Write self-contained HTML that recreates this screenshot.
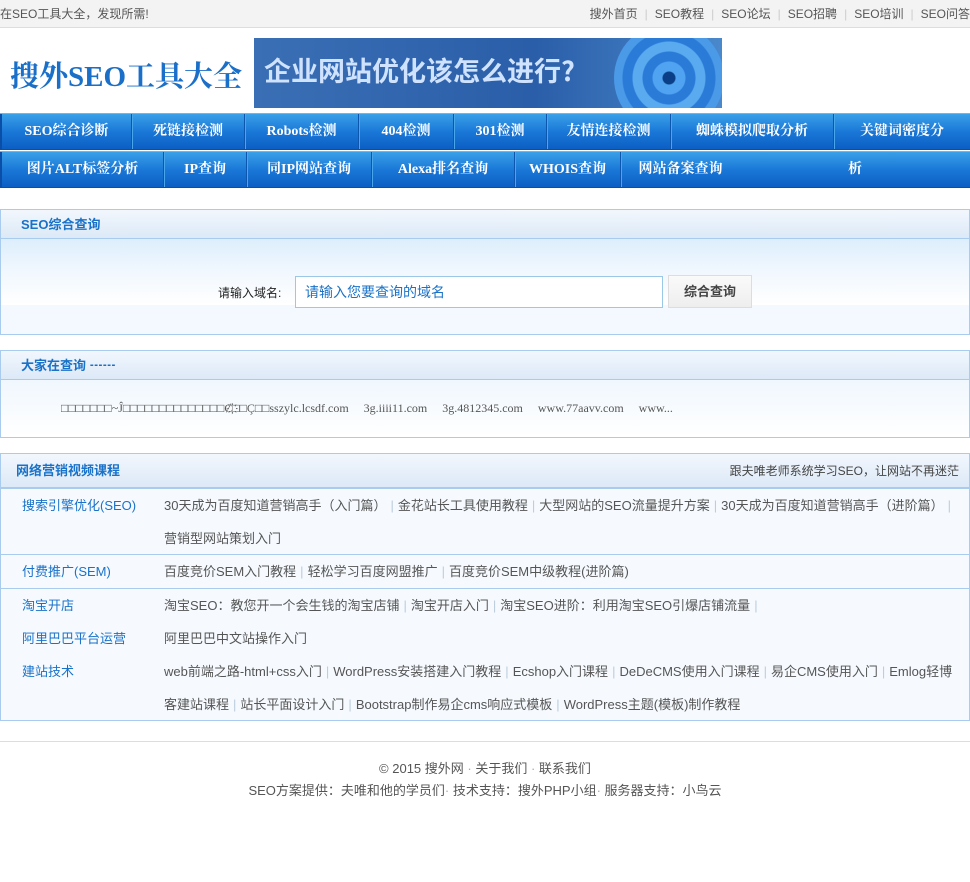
<!DOCTYPE html>
<html><head><meta charset="utf-8"><style>
*{margin:0;padding:0;box-sizing:border-box}
body{width:970px;height:882px;background:#fff;font-family:"Liberation Sans","Noto Sans CJK SC",sans-serif;font-size:13px;color:#555;position:relative;overflow:hidden}
.top{height:28px;background:#f3f3f3;border-bottom:1px solid #ddd;font-size:12px;color:#555;line-height:28px;position:relative}
.top .l{position:absolute;left:0}
.top .r{position:absolute;right:0}
.top .r span{color:#ccc;margin:0 7px}
.logo{position:absolute;left:10px;top:54px;font-family:"Liberation Serif","Noto Serif CJK SC",serif;font-weight:bold;font-size:29px;color:#1a6fc8;letter-spacing:0}
.ban{position:absolute;left:254px;top:38px;width:468px;height:70px;background:linear-gradient(90deg,#3a6fb5,#2a5ea8 60%,#4a88cc);overflow:hidden}
.ban b{position:absolute;left:10px;top:12px;font-size:27px;color:#cfe2ff;font-family:"Noto Sans CJK SC",sans-serif;font-weight:bold}
.ban i{position:absolute;left:360px;top:-15px;width:110px;height:110px;border-radius:50%;background:radial-gradient(circle,#0a3f88 0 6px,#4fa3f0 7px 16px,#2a7ad8 17px 26px,#5aaaf0 27px 36px,#2a7ad8 37px 46px,#4a9ae8 47px 55px)}
.nav{position:absolute;left:0;width:970px;height:37px;background:linear-gradient(#3aa0e8,#1a78d8 50%,#0c5fc4);border-top:1px solid #6ab8f0;border-bottom:1px solid #0a4ea8;display:flex;font-family:"Liberation Serif","Noto Serif CJK SC",serif;font-weight:bold;color:#fff;font-size:14px;line-height:36px}
.nav div{text-align:center;border-left:1px solid #0d56ad;box-shadow:inset 1px 0 0 #4aa6ea}
.nav div:first-child{border-left:none;box-shadow:none;border-left:2px solid #0a4ea8}
.panel{position:absolute;left:0;width:970px;border:1px solid #a9cbed;background:#f6faff}
.ph{height:29px;background:linear-gradient(#f2f7fd,#dce9f7);border-bottom:1px solid #a9cbed;font-weight:bold;color:#1a72c8;font-size:13px;line-height:29px;padding-left:20px;position:relative}
.inp{position:absolute;left:295px;top:276px;width:368px;height:32px;border:1px solid #9cc8e8;background:#fff;color:#1a72c8;font-size:14px;line-height:30px;padding-left:9px}
.btn{position:absolute;left:668px;top:275px;width:84px;height:33px;border:1px solid #ddd;background:linear-gradient(#fafafa,#eee);color:#444;font-weight:bold;font-size:13px;line-height:31px;text-align:center}
.row{display:flex;border-top:1px solid #a9cbed;padding:0}
.row:first-of-type{border-top:none}
.c1{width:163px;padding-left:21px;color:#1a72c8;line-height:33px}
.c2{flex:1;line-height:33px;color:#555;padding-right:10px}
.c2 s{text-decoration:none;color:#bcd;margin:0 4px}
</style></head><body>
<div class="top"><span class="l">在SEO工具大全，发现所需!</span><span class="r">搜外首页<span>|</span>SEO教程<span>|</span>SEO论坛<span>|</span>SEO招聘<span>|</span>SEO培训<span>|</span>SEO问答</span></div>
<div class="logo">搜外SEO工具大全</div>
<div class="ban"><b>企业网站优化该怎么进行?</b><i></i></div>
<div class="nav" style="top:113px"><div style="width:131px">SEO综合诊断</div><div style="width:113px">死链接检测</div><div style="width:114px">Robots检测</div><div style="width:95px">404检测</div><div style="width:93px">301检测</div><div style="width:124px">友情连接检测</div><div style="width:163px">蜘蛛模拟爬取分析</div><div style="width:137px">关键词密度分</div></div>
<div class="nav" style="top:151px"><div style="width:163px">图片ALT标签分析</div><div style="width:83px">IP查询</div><div style="width:125px">同IP网站查询</div><div style="width:143px">Alexa排名查询</div><div style="width:106px">WHOIS查询</div><div style="width:120px">网站备案查询</div><div style="width:230px;box-shadow:none;border-left:none">析</div></div>
<div class="panel" style="top:209px;height:126px;background:linear-gradient(#ddeefc 29px,#f0f7fe 60px,#fff 95px,#f4f9ff 95px)"><div class="ph">SEO综合查询</div>
<span style="position:absolute;left:217px;top:74px;font-size:12px;color:#222">请输入域名:</span></div>
<div class="inp">请输入您要查询的域名</div><div class="btn">综合查询</div>
<div class="panel" style="top:350px;height:88px;background:linear-gradient(#e8f3fd,#fff)"><div class="ph">大家在查询 ┅┅</div>
<div style="position:absolute;left:60px;top:50px;font-family:'Liberation Serif',serif;font-size:12px;color:#555;white-space:nowrap">□□□□□□□~Ĵ□□□□□□□□□□□□□□Ȼ҉□□Ç□□sszylc.lcsdf.com &nbsp;&nbsp;&nbsp; 3g.iiii11.com &nbsp;&nbsp;&nbsp; 3g.4812345.com &nbsp;&nbsp;&nbsp; www.77aavv.com &nbsp;&nbsp;&nbsp; www...</div></div>
<div class="panel" style="top:453px;height:268px"><div class="ph" style="height:34px;line-height:34px;padding-left:15px">网络营销视频课程<span style="position:absolute;right:10px;font-weight:normal;color:#444;font-size:12px">跟夫唯老师系统学习SEO，让网站不再迷茫</span></div>
<div class="row" style="height:66px"><div class="c1">搜索引擎优化(SEO)</div><div class="c2">30天成为百度知道营销高手（入门篇）<s>|</s>金花站长工具使用教程<s>|</s>大型网站的SEO流量提升方案<s>|</s>30天成为百度知道营销高手（进阶篇）<s>|</s><br>营销型网站策划入门</div></div>
<div class="row" style="height:34px;border-top:1px solid #a9cbed"><div class="c1">付费推广(SEM)</div><div class="c2">百度竞价SEM入门教程<s>|</s>轻松学习百度网盟推广<s>|</s>百度竞价SEM中级教程(进阶篇)</div></div>
<div class="row" style="border-top:1px solid #a9cbed"><div class="c1">淘宝开店<br>阿里巴巴平台运营<br>建站技术</div><div class="c2">淘宝SEO：教您开一个会生钱的淘宝店铺<s>|</s>淘宝开店入门<s>|</s>淘宝SEO进阶：利用淘宝SEO引爆店铺流量<s>|</s><br>阿里巴巴中文站操作入门<br>web前端之路-html+css入门<s>|</s>WordPress安装搭建入门教程<s>|</s>Ecshop入门课程<s>|</s>DeDeCMS使用入门课程<s>|</s>易企CMS使用入门<s>|</s>Emlog轻博<br>客建站课程<s>|</s>站长平面设计入门<s>|</s>Bootstrap制作易企cms响应式模板<s>|</s>WordPress主题(模板)制作教程</div></div>
</div>
<div style="position:absolute;top:741px;left:0;width:970px;border-top:1px solid #ddd"></div>
<div style="position:absolute;top:758px;left:0;width:970px;text-align:center;line-height:22px;color:#555">© 2015 搜外网 <span style="color:#aaa">·</span> 关于我们 <span style="color:#aaa">·</span> 联系我们<br>SEO方案提供：夫唯和他的学员们<span style="color:#aaa">·</span> 技术支持：搜外PHP小组<span style="color:#aaa">·</span> 服务器支持：小鸟云</div>
</body></html>
